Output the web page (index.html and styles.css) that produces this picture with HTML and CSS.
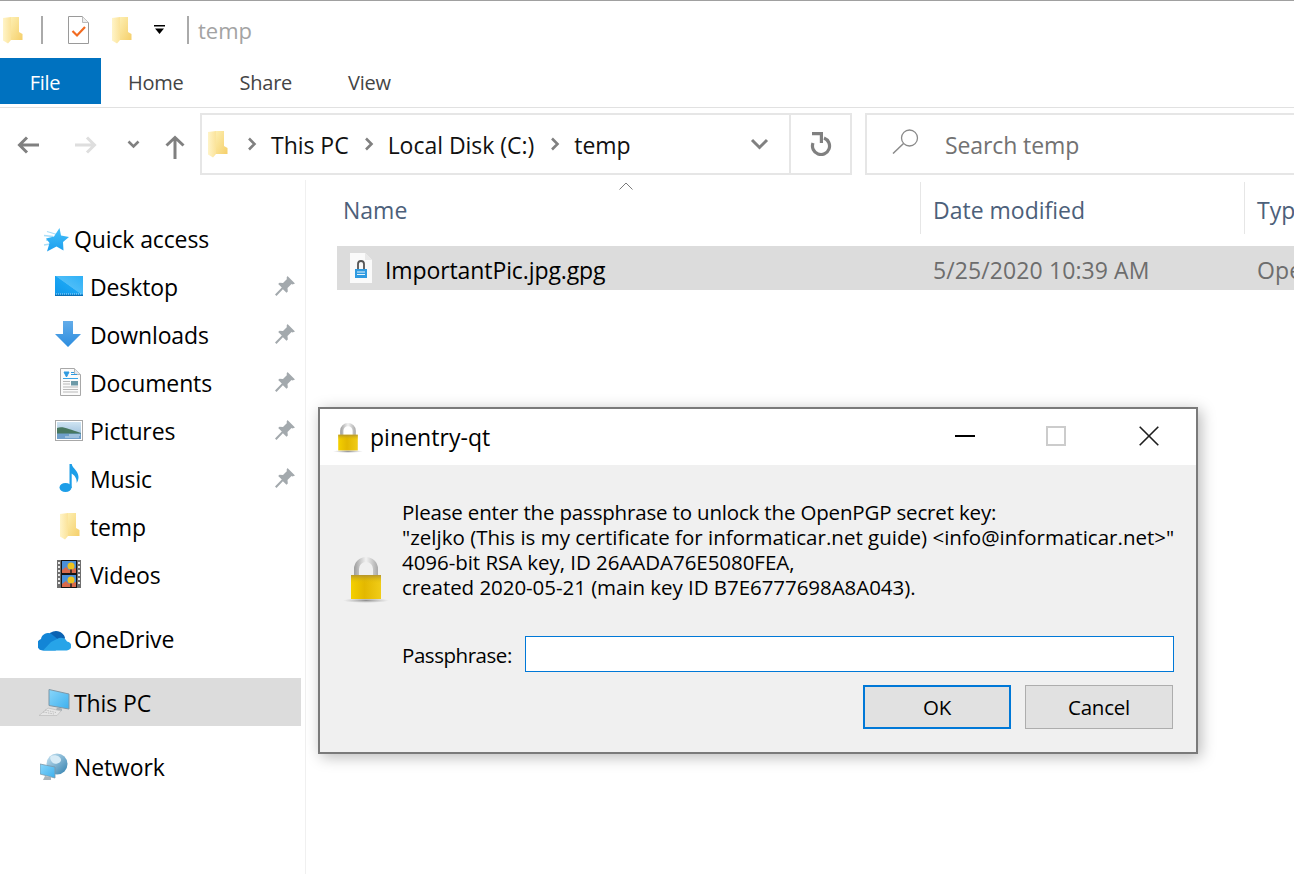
FILE: index.html
```html
<!DOCTYPE html>
<html lang="en">
<head>
<meta charset="utf-8">
<title>temp - pinentry-qt</title>
<link rel="stylesheet" href="styles.css">
</head>
<body>
<svg class="sprite" aria-hidden="true">
  <defs>
    <linearGradient id="gFold" x1="0" y1="0" x2="1" y2="1"><stop offset="0" stop-color="#fdeeb0"/><stop offset="1" stop-color="#f5cf6a"/></linearGradient>
    <linearGradient id="gLeaf" x1="0" y1="0" x2="1" y2="0"><stop offset="0" stop-color="#fff4c8"/><stop offset="1" stop-color="#fbe39a"/></linearGradient>
    <linearGradient id="gGold" x1="0" y1="0" x2="1" y2="0"><stop offset="0" stop-color="#f4d000"/><stop offset=".45" stop-color="#e3b800"/><stop offset="1" stop-color="#f0cc18"/></linearGradient>
    <linearGradient id="gGoldV" x1="0" y1="0" x2="0" y2="1"><stop offset="0" stop-color="#a88a3a" stop-opacity=".8"/><stop offset=".35" stop-color="#e8c400" stop-opacity="0"/></linearGradient>
    <linearGradient id="gShack" x1="0" y1="0" x2="1" y2="0"><stop offset="0" stop-color="#9c9c9c"/><stop offset=".5" stop-color="#f2f2f2"/><stop offset="1" stop-color="#a8a8a8"/></linearGradient>
    <radialGradient id="gShadow"><stop offset="0" stop-color="#777" stop-opacity=".8"/><stop offset="1" stop-color="#999" stop-opacity="0"/></radialGradient>
    <linearGradient id="gDesk" x1="0" y1="1" x2="1" y2="0"><stop offset="0" stop-color="#0c96ea"/><stop offset=".5" stop-color="#1aa5f3"/><stop offset=".52" stop-color="#4dbdf8"/><stop offset="1" stop-color="#2eb0f6"/></linearGradient>
    <linearGradient id="gDown" x1="0" y1="0" x2="0" y2="1"><stop offset="0" stop-color="#63ace9"/><stop offset="1" stop-color="#2c8ddf"/></linearGradient>
    <linearGradient id="gStar" x1="0" y1="0" x2="0" y2="1"><stop offset="0" stop-color="#45c0fa"/><stop offset="1" stop-color="#1d9fee"/></linearGradient>
    <linearGradient id="gSky" x1="0" y1="0" x2="0" y2="1"><stop offset="0" stop-color="#cfe4f2"/><stop offset="1" stop-color="#8fb6d6"/></linearGradient>
    <linearGradient id="gScreen" x1="0" y1="0" x2="1" y2="1"><stop offset="0" stop-color="#8ad6fa"/><stop offset="1" stop-color="#3db0ee"/></linearGradient>
    <linearGradient id="gGlobe" x1="0" y1="0" x2="1" y2="1"><stop offset="0" stop-color="#cde6f4"/><stop offset="1" stop-color="#2f7fae"/></linearGradient>
    <symbol id="folder" viewBox="0 0 20 28">
      <path d="M8 1h8v15l3.500 2v6H8z" fill="url(#gFold)"/>
      <path d="M0 2l8-1v23l-3 3.500-5-3z" fill="url(#gLeaf)"/>
    </symbol>
    <symbol id="pin" viewBox="0 0 20 20">
      <path d="M12.500 0L20 7.500l-2.500 1-1-.500-4 4 .3 3.500-1.300 1.300-3.600-3.600L1.500 20 0 18.500l6.800-6.900-3.600-3.600L4.500 6.700 8 7l4-4-.5-1z" fill="#a3a9ad"/>
    </symbol>
    <symbol id="padlock" viewBox="0 0 46 48">
      <ellipse cx="23" cy="44.500" rx="23" ry="2.500" fill="url(#gShadow)"/>
      <path d="M11 20V13a12 12 0 0 1 24 0v7h-5V13a7 7 0 0 0-14 0v7z" fill="url(#gShack)"/>
      <rect x="8" y="19" width="30" height="24" fill="url(#gGold)"/>
      <rect x="8" y="19" width="30" height="24" fill="url(#gGoldV)"/>
    </symbol>
  </defs>
</svg>

<div class="app">
  <header class="qat">
    <svg class="ico-folder qat-f1"><use href="#folder"/></svg>
    <span class="qat-sep sep-a"></span>
    <svg class="ico-props" viewBox="0 0 21 28">
      <path d="M.5.500h14l6 6v21H.500z" fill="#fff" stroke="#9a9a9a"/>
      <path d="M14.500.500v6h6" fill="#eee" stroke="#bbb"/>
      <path d="M4.500 15l4.500 4.500 8-8.500" fill="none" stroke="#f26b21" stroke-width="2.200"/>
    </svg>
    <svg class="ico-folder qat-f2"><use href="#folder"/></svg>
    <svg class="ico-drop" viewBox="0 0 11 9"><rect width="11" height="1.500" fill="#000"/><path d="M1 3.500h9L5.500 9z" fill="#000"/></svg>
    <span class="qat-sep sep-b"></span>
    <span class="win-title">temp</span>
  </header>

  <nav class="tabs">
    <span class="tab tab-file">File</span>
    <span class="tab tab-home">Home</span>
    <span class="tab tab-share">Share</span>
    <span class="tab tab-view">View</span>
  </nav>

  <div class="navrow">
    <svg class="nav-back" viewBox="0 0 22 18"><path d="M22 9H3M10 1.500L2.500 9l7.500 7.500" fill="none" stroke="#808080" stroke-width="3"/></svg>
    <svg class="nav-fwd" viewBox="0 0 22 18"><path d="M0 9h19M12 1.500L19.500 9 12 16.500" fill="none" stroke="#dedede" stroke-width="3"/></svg>
    <svg class="nav-recent" viewBox="0 0 13 9"><path d="M1.500 1.500l5 5 5-5" fill="none" stroke="#808080" stroke-width="2.600"/></svg>
    <svg class="nav-up" viewBox="0 0 20 24"><path d="M10 24V3M1.500 10.500L10 2.500l8.500 8" fill="none" stroke="#808080" stroke-width="3"/></svg>
    <div class="addr">
      <svg class="ico-folder addr-f"><use href="#folder"/></svg>
      <svg class="crumb-chev chev-a" viewBox="0 0 10 14"><path d="M2 1.500L7.500 7 2 12.500" fill="none" stroke="#808080" stroke-width="2.600"/></svg>
      <span class="crumb">This PC</span>
      <svg class="crumb-chev chev-b" viewBox="0 0 10 14"><path d="M2 1.500L7.500 7 2 12.500" fill="none" stroke="#808080" stroke-width="2.600"/></svg>
      <span class="crumb">Local Disk (C:)</span>
      <svg class="crumb-chev chev-c" viewBox="0 0 10 14"><path d="M2 1.500L7.500 7 2 12.500" fill="none" stroke="#808080" stroke-width="2.600"/></svg>
      <span class="crumb">temp</span>
      <svg class="addr-drop" viewBox="0 0 19 12"><path d="M2 2l7.500 7.500L17 2" fill="none" stroke="#808080" stroke-width="3"/></svg>
      <span class="addr-refresh">
        <svg class="ico-refresh" viewBox="0 0 22 24"><path d="M14 6A8.540 8.540 0 1 1 3 11" fill="none" stroke="#808080" stroke-width="3.200"/><path d="M2 0h11v11h-3.200V3.200H2z" fill="#808080"/></svg>
      </span>
    </div>
    <div class="search">
      <svg class="ico-search" viewBox="0 0 27 25"><circle cx="17.500" cy="9" r="8" fill="none" stroke="#8a8a8a" stroke-width="1.300"/><path d="M11.500 14.500L1 24.500" fill="none" stroke="#8a8a8a" stroke-width="1.500"/></svg>
      <span class="search-text">Search temp</span>
    </div>
  </div>

  <div class="main">
    <aside class="side">
      <ul class="tree">
        <li class="node node-top">
          <span class="slot"><svg class="ic-star" viewBox="0 0 26 24"><path d="M4 3.500l10 3M1 7.500l9 1M3 12l5 .500M1 17l6-1" stroke="#a9def9" stroke-width="1.300" fill="none"/><path d="M16.500 0L18 7.500 26 9 20 14l.5 8.500-7-4-9.500 5L6.500 15 3 10.500l8-2z" fill="url(#gStar)"/></svg></span>
          <span class="lbl">Quick access</span>
        </li>
        <li class="node node-sub">
          <span class="slot"><svg class="ic-desk" viewBox="0 0 28 20"><rect width="28" height="20" fill="url(#gDesk)"/><rect y="18.500" width="28" height="1.500" fill="#0a6fb5"/><path d="M1 18h26" stroke="#cfeeff" stroke-width=".8" stroke-dasharray="1 1"/></svg></span>
          <span class="lbl">Desktop</span>
          <svg class="pin"><use href="#pin"/></svg>
        </li>
        <li class="node node-sub">
          <span class="slot"><svg class="ic-down" viewBox="0 0 26 26"><path d="M8 0h10v13h8L13 26 0 13h8z" fill="url(#gDown)"/></svg></span>
          <span class="lbl">Downloads</span>
          <svg class="pin"><use href="#pin"/></svg>
        </li>
        <li class="node node-sub">
          <span class="slot"><svg class="ic-doc" viewBox="0 0 21 28"><path d="M.5.500h14l6 6v21H.500z" fill="#fbfbfb" stroke="#a8a8a8"/><path d="M14.500.500v6h6" fill="#e2e8ee" stroke="#b5b5b5"/><path d="M4 4h5l-2.500 5zM11 4.500h3M11 6.500h6" stroke="#2f9ae0" fill="#2f9ae0"/><path d="M3 10.500h15" stroke="#3aa4e6"/><path d="M3 13.500h7M3 16h7M3 19h15M3 21.500h15M3 24h15" stroke="#b9b9b9"/><rect x="11" y="13" width="7" height="4.500" fill="#6d9aa8"/></svg></span>
          <span class="lbl">Documents</span>
          <svg class="pin"><use href="#pin"/></svg>
        </li>
        <li class="node node-sub">
          <span class="slot"><svg class="ic-pic" viewBox="0 0 28 21"><rect x=".5" y=".5" width="27" height="20" fill="#fff" stroke="#a8a8a8"/><rect x="2" y="2" width="24" height="17" fill="url(#gSky)"/><path d="M2 8c6-2 11 1 24 5v1.500H2z" fill="#47775f"/><rect x="2" y="13.500" width="24" height="5.500" fill="#6f9fca"/><path d="M14 15h11M10 17h14" stroke="#cfe2ef"/></svg></span>
          <span class="lbl">Pictures</span>
          <svg class="pin"><use href="#pin"/></svg>
        </li>
        <li class="node node-sub">
          <span class="slot"><svg class="ic-music" viewBox="0 0 20 28"><ellipse cx="6.500" cy="23.500" rx="6" ry="4.500" fill="#1d9ee8"/><path d="M10.500 24V0h2.200c.6 4 6.800 7 6.800 13 0 2.500-.8 4.500-1.800 6 .3-5-2.500-8-5-9.500V24z" fill="#1d9ee8"/></svg></span>
          <span class="lbl">Music</span>
          <svg class="pin"><use href="#pin"/></svg>
        </li>
        <li class="node node-sub">
          <span class="slot"><svg class="ico-folder"><use href="#folder"/></svg></span>
          <span class="lbl">temp</span>
        </li>
        <li class="node node-sub">
          <span class="slot"><svg class="ic-vid" viewBox="0 0 24 28"><rect width="24" height="28" fill="#6f6f6f"/><rect x="4" y="0" width="16" height="28" fill="#151515"/><rect x="5" y="1" width="14" height="12" fill="#4a90d8"/><rect x="5" y="15" width="14" height="12" fill="#4a90d8"/><path d="M5 10l4-3 3 3 7-2v5H5zM5 24l4-3 3 3 7-2v5H5z" fill="#d96a4a"/><circle cx="14" cy="6" r="3.500" fill="#eec21d"/><circle cx="14" cy="20" r="3.500" fill="#eec21d"/><path d="M14 9.500v3.500M14 23.500v3.500" stroke="#222" stroke-width="1.500"/><path d="M2 2v24M22 2v24" stroke="#e8e8e8" stroke-width="2" stroke-dasharray="2 2"/></svg></span>
          <span class="lbl">Videos</span>
        </li>
      </ul>
      <ul class="tree tree-gap">
        <li class="node node-top">
          <span class="slot"><svg class="ic-cloud" viewBox="0 0 33 24"><path d="M11 7a9.500 9.500 0 0 1 16 3.500l-3 10H11z" fill="#0b62b2"/><path d="M4.500 23.500a6 6 0 0 1-1.500-11.500 7 7 0 0 1 10.500-5l12 10-8 6.500z" fill="#1285d6"/><path d="M5 23.500H28.500a4.500 4.500 0 0 0 .5-9 6.500 6.500 0 0 0-8-3.500l-8 4z" fill="#27a4e8"/></svg></span>
          <span class="lbl">OneDrive</span>
        </li>
      </ul>
      <ul class="tree tree-pc">
        <li class="node node-top node-on">
          <span class="slot slot-pc"><svg class="ic-pc" viewBox="0 0 32 27"><path d="M11 .5l20 4.500v15l-20-3.500z" fill="url(#gScreen)" stroke="#7f97a6"/><path d="M19 18.500l5 1v2.500l-6-1z" fill="#a9b2b8"/><path d="M10 19l13 3-4 4.500H1z" fill="#e6e6e6" stroke="#bdbdbd" stroke-width=".7"/><path d="M7 21l11 2.500M5 23l11 2" stroke="#b4b4b4" stroke-width=".8" stroke-dasharray="1.500 1"/></svg></span>
          <span class="lbl">This PC</span>
        </li>
      </ul>
      <ul class="tree tree-net">
        <li class="node node-top">
          <span class="slot"><svg class="ic-net" viewBox="0 0 28 28"><circle cx="17" cy="11" r="10.500" fill="url(#gGlobe)"/><path d="M11 3c5-2 10 1 10 4s-6 5-8 3-4-5-2-7z" fill="#d7ebf6"/><path d="M0 11l15 3v11L0 21z" fill="url(#gScreen)" stroke="#7e98a8" stroke-width=".8"/><path d="M5 23l6 1v3H3z" fill="#aab4ba"/></svg></span>
          <span class="lbl">Network</span>
        </li>
      </ul>
    </aside>

    <section class="files">
      <div class="cols cols-head">
        <span class="col col-name">Name</span>
        <span class="col col-rule">Date modified</span>
        <span class="col col-rule">Type</span>
        <svg class="sort" viewBox="0 0 14 8"><path d="M.5 7.500L7 1l6.500 6.500" fill="none" stroke="#7a7a7a" stroke-width="1"/></svg>
      </div>
      <div class="cols file-row">
        <span class="cell-name">
          <svg class="ic-gpg" viewBox="0 0 22 30"><path d="M0 0h15l7 7v23H0z" fill="#fafafa"/><path d="M15 0l7 7h-7z" fill="#e9e9e9"/><path d="M8 16V11a3 3 0 0 1 6 0v5" fill="none" stroke="#555" stroke-width="1.800"/><rect x="5" y="16" width="12" height="9" fill="#2f9ae0"/><path d="M7 19h8M7 21.500h8" stroke="#e6f4fd"/></svg>
          <span class="fname">ImportantPic.jpg.gpg</span>
        </span>
        <span class="cell-meta">5/25/2020 10:39 AM</span>
        <span class="cell-meta">OpenPGP</span>
      </div>
    </section>
  </div>
</div>

<div class="dlg" role="dialog">
  <div class="dlg-bar">
    <svg class="lock-sm"><use href="#padlock"/></svg>
    <span class="dlg-title">pinentry-qt</span>
    <span class="wb wb-min"></span>
    <span class="wb wb-max"></span>
    <svg class="wb-close" viewBox="0 0 20 20"><path d="M.7.700l18.600 18.600M19.300.700L.7 19.300" stroke="#1e1e1e" stroke-width="1.600" fill="none"/></svg>
  </div>
  <div class="dlg-body">
    <div class="msg-row">
      <svg class="lock-lg"><use href="#padlock"/></svg>
      <p class="msg"><span class="ln ln-a">Please enter the passphrase to unlock the OpenPGP secret key:</span><span class="ln ln-b">"zeljko (This is my certificate for informaticar.net guide) &lt;info@informaticar.net&gt;"</span><span class="ln">4096-bit RSA key, ID 26AADA76E5080FEA,</span><span class="ln">created 2020-05-21 (main key ID B7E6777698A8A043).</span></p>
    </div>
    <div class="pass-row">
      <label class="pass-lbl" for="pw">Passphrase:</label>
      <input class="pass-in" id="pw" type="password">
    </div>
    <div class="btns">
      <button class="btn btn-ok" type="button">OK</button>
      <button class="btn btn-cancel" type="button">Cancel</button>
    </div>
  </div>
</div>
</body>
</html>
```
FILE: styles.css
```css
* { box-sizing: border-box; }
html, body { margin: 0; height: 100%; }
body {
  background: #fff;
  overflow: hidden;
  font-family: "Open Sans", "Noto Sans", sans-serif;
  color: #000;
}
svg { display: block; flex: none; }
.sprite { width: 0; height: 0; }
ul { list-style: none; margin: 0; padding: 0; }

.app { width: 1294px; height: 874px; display: flex; flex-direction: column; overflow: hidden; }

/* quick access toolbar */
.qat { height: 58px; flex: none; border-top: 1px solid #a0a0a0; display: flex; align-items: center; }
.ico-folder { width: 20px; height: 28px; }
.qat-f1 { margin-left: 3px; }
.qat-sep { width: 2px; height: 28px; background: #aaa; }
.sep-a { margin-left: 18px; }
.ico-props { width: 21px; height: 28px; margin-left: 25px; }
.qat-f2 { margin-left: 23px; }
.ico-drop { width: 11px; height: 9px; margin-left: 22px; }
.sep-b { margin-left: 22px; }
.win-title { margin-left: 9px; font-size: 22px; color: #a3a3a3; }

/* ribbon tabs */
.tabs { height: 50px; flex: none; border-bottom: 1px solid #e1e1e1; display: flex; align-items: flex-start; }
.tab { height: 46px; display: flex; align-items: center; padding-top: 3px; font-size: 20px; color: #444; letter-spacing: -.25px; }
.tab-file { width: 101px; justify-content: center; padding-right: 11px; padding-top: 2px; background: #0072c0; color: #fff; }
.tab-home { margin-left: 27px; }
.tab-share { margin-left: 56px; }
.tab-view { margin-left: 56px; }

/* address row */
.navrow { height: 72px; flex: none; display: flex; align-items: flex-start; padding-top: 5px; }
.nav-back, .nav-fwd { margin-top: 23px; }
.nav-back { width: 22px; height: 18px; margin-left: 17px; }
.nav-fwd { width: 22px; height: 18px; margin-left: 36px; }
.nav-recent { width: 13px; height: 9px; margin-left: 30px; margin-top: 27px; }
.nav-up { width: 20px; height: 24px; margin-left: 25px; margin-top: 22px; }
.addr { width: 652px; height: 62px; margin-left: 15px; border: 2px solid #e6e6e6; display: flex; align-items: center; }
.addr-f { margin-left: 6px; }
.crumb-chev { width: 10px; height: 14px; }
.chev-a { margin-left: 19px; }
.chev-b { margin-left: 15px; }
.chev-c { margin-left: 16px; }
.crumb { margin-left: 14px; padding-top: 2px; font-size: 23px; letter-spacing: -.03px; color: #111; white-space: nowrap; }
.addr-drop { width: 19px; height: 12px; margin-left: auto; margin-right: 20px; }
.addr-refresh { width: 61px; height: 100%; border-left: 2px solid #e6e6e6; display: flex; align-items: center; justify-content: center; }
.ico-refresh { width: 22px; height: 24px; }
.search { flex: 1; height: 62px; margin-left: 13px; margin-right: -4px; border: 2px solid #e6e6e6; display: flex; align-items: center; }
.ico-search { width: 27px; height: 25px; margin-left: 25px; margin-bottom: 6px; }
.search-text { margin-left: 26px; padding-top: 2px; font-size: 23px; letter-spacing: -.1px; color: #727272; }

/* main */
.main { flex: 1; display: flex; min-height: 0; }
.side { width: 306px; flex: none; padding-top: 36px; border-right: 1px solid #f0f0f0; }
.tree { width: 301px; }
.tree-gap { margin-top: 16px; }
.tree-pc { margin-top: 14px; }
.tree-net { margin-top: 18px; }
.node { height: 48px; display: flex; align-items: center; }
.node-top { padding-left: 34px; }
.node-sub { padding-left: 50px; padding-right: 6px; }
.node-on { background: #dcdcdc; padding-top: 3px; }
.slot { width: 40px; height: 32px; flex: none; display: flex; align-items: center; justify-content: center; margin-bottom: 4px; }
.node-top .slot { margin-bottom: 0; }
.lbl { font-size: 23px; letter-spacing: -.12px; color: #000; white-space: nowrap; margin-bottom: 2px; }
.pin { width: 20px; height: 20px; margin-left: auto; margin-bottom: 4px; }
.ic-star { width: 26px; height: 24px; margin-left: 4px; }
.ic-desk { width: 28px; height: 20px; margin-right: 2px; }
.ic-down { width: 26px; height: 26px; margin-right: 4px; }
.ic-doc { width: 21px; height: 28px; }
.ic-pic { width: 28px; height: 21px; margin-right: 2px; }
.ic-music { width: 20px; height: 28px; margin-right: 2px; }
.ic-vid { width: 24px; height: 28px; margin-right: 2px; }
.ic-cloud { width: 33px; height: 24px; margin-bottom: 2px; }
.ic-pc { width: 32px; height: 27px; margin-bottom: 2px; }
.ic-net { width: 28px; height: 28px; margin-bottom: 2px; }

/* file list */
.files { flex: 1; min-width: 0; padding: 2px 0 0 31px; }
.cols { display: grid; grid-template-columns: 583px 324px 1fr; }
.cols-head { position: relative; height: 52px; }
.col { font-size: 23px; color: #4c607a; display: flex; align-items: center; padding-top: 3px; white-space: nowrap; overflow: hidden; }
.col-name { padding-left: 6px; }
.col-rule { padding-left: 12px; border-left: 1px solid #e6e6e6; }
.sort { position: absolute; left: 282px; top: 0; width: 14px; height: 8px; }
.file-row { height: 44px; margin-top: 12px; background: #dcdcdc; align-items: center; }
.cell-name { display: flex; align-items: center; padding-left: 13px; }
.ic-gpg { width: 22px; height: 30px; }
.fname { margin-left: 13px; padding-top: 3px; font-size: 23px; letter-spacing: -.1px; color: #000; white-space: nowrap; }
.cell-meta { padding-left: 13px; padding-top: 3px; font-size: 23px; letter-spacing: .1px; color: #6d6d6d; white-space: nowrap; overflow: hidden; }

/* pinentry dialog */
.dlg {
  position: absolute; left: 318px; top: 407px; width: 880px; height: 347px;
  border: 2px solid #7a7a7a; background: #f0f0f0;
  box-shadow: 3px 3px 14px rgba(0,0,0,.28);
  display: flex; flex-direction: column;
}
.dlg-bar { height: 56px; flex: none; background: #fff; display: flex; align-items: center; padding-right: 37px; }
.lock-sm { width: 30px; height: 32px; margin-left: 13px; margin-top: 2px; }
.dlg-title { flex: 1; margin-left: 7px; font-size: 23px; letter-spacing: .05px; }
.wb-min { width: 20px; height: 2px; background: #000; margin-bottom: 3px; }
.wb-max { width: 20px; height: 20px; border: 2px solid #ccc; margin-left: 71px; margin-bottom: 2px; }
.wb-close { width: 20px; height: 20px; margin-left: 73px; margin-bottom: 2px; }
.dlg-body { flex: 1; padding: 35px 22px 0 0; display: flex; flex-direction: column; }
.msg-row { display: flex; align-items: flex-end; height: 100px; }
.lock-lg { width: 46px; height: 48px; margin-left: 23px; margin-bottom: -4px; }
.msg { margin: 0 0 0 13px; font-size: 20.500px; line-height: 25px; letter-spacing: -.05px; white-space: nowrap; }
.ln { display: block; }
.ln-a { letter-spacing: -.17px; }
.ln-b { letter-spacing: .01px; }
.pass-row { display: flex; align-items: center; margin-top: 36px; padding-left: 82px; }
.pass-lbl { width: 123px; flex: none; font-size: 20.500px; letter-spacing: -.45px; padding-top: 2px; }
.pass-in { flex: 1; height: 36px; border: 1px solid #0078d7; background: #fff; outline: none; padding: 0 4px; }
.btns { display: flex; justify-content: flex-end; gap: 14px; margin-top: 13px; padding-right: 1px; }
.btn { width: 148px; height: 44px; background: #e1e1e1; font: inherit; font-size: 20.500px; letter-spacing: -.25px; color: #000; padding: 0; }
.btn-ok { border: 2px solid #0078d7; }
.btn-cancel { border: 1px solid #adadad; }
```
